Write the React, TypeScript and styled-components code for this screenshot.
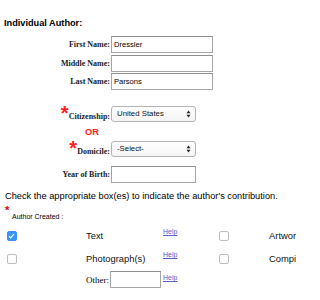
import React from 'react';
import { styled, createGlobalStyle } from 'styled-components';

const GlobalStyle = createGlobalStyle`
    html, body {
        margin: 0;
        padding: 0;
        background: #ffffff;
    }
    body {
        font-family: "Liberation Sans", Arial, sans-serif;
        color: #000;
    }
`;

const SANS = `"Liberation Sans", Arial, sans-serif`;
const SERIF = `"Liberation Serif", "Times New Roman", serif`;

type Contribution = {
    label: string;
    checked: boolean;
};

const leftColumn: Contribution[] = [
    { label: 'Text', checked: true },
    { label: 'Photograph(s)', checked: false },
];

const rightColumn: Contribution[] = [
    { label: 'Artwork', checked: false },
    { label: 'Compilation', checked: false },
];

const SelectArrows: React.FC = () => (
    <ArrowIcon width="5" height="8" viewBox="0 0 5 8">
        <path d="M0.5 3.2 L2.5 0.6 L4.5 3.2 Z" fill="#222" />
        <path d="M0.5 4.8 L2.5 7.4 L4.5 4.8 Z" fill="#222" />
    </ArrowIcon>
);

const CheckBox: React.FC<{ checked: boolean }> = ({ checked }) => (
    <Box $checked={checked}>
        {checked && (
            <svg width="7" height="6" viewBox="0 0 7 6">
                <path d="M1 3.2 L2.7 4.9 L6 1" stroke="#fff" strokeWidth="1.1" fill="none" />
            </svg>
        )}
    </Box>
);

export default function App() {
    return (
        <Page>
            <GlobalStyle />
            <Heading>Individual Author:</Heading>

            <NameGrid>
                <FieldLabel>First Name:</FieldLabel>
                <TextInput defaultValue="Dressler" $width={102} />
                <FieldLabel>Middle Name:</FieldLabel>
                <TextInput defaultValue="" $width={102} />
                <FieldLabel>Last Name:</FieldLabel>
                <TextInput defaultValue="Parsons" $width={102} />
            </NameGrid>

            <PlaceGrid>
                <StarLabel>
                    <Star>*</Star>
                    <StarText>Citizenship:</StarText>
                </StarLabel>
                <SelectWrap>
                    <Select defaultValue="us">
                        <option value="us">United States</option>
                    </Select>
                    <SelectArrows />
                </SelectWrap>

                <OrCell>OR</OrCell>

                <StarLabel>
                    <Star>*</Star>
                    <StarText>Domicile:</StarText>
                </StarLabel>
                <SelectWrap>
                    <Select defaultValue="none">
                        <option value="none">-Select-</option>
                    </Select>
                    <SelectArrows />
                </SelectWrap>
            </PlaceGrid>

            <BirthGrid>
                <FieldLabel>Year of Birth:</FieldLabel>
                <TextInput defaultValue="" $width={85} />
            </BirthGrid>

            <Instruction>Check the appropriate box(es) to indicate the author's contribution.</Instruction>
            <SmallStar>*</SmallStar>
            <CreatedLabel>Author Created :</CreatedLabel>

            <ContributionGrid>
                {leftColumn.map((item, index) => (
                    <React.Fragment key={index}>
                        <CheckBox checked={item.checked} />
                        <OptionText>{item.label}</OptionText>
                        <HelpLink href="#">Help</HelpLink>
                        <CheckBox checked={rightColumn[index].checked} />
                        <OptionText>{rightColumn[index].label}</OptionText>
                    </React.Fragment>
                ))}
                <span />
                <OtherCell>
                    <OtherLabel>Other:</OtherLabel>
                    <TextInput defaultValue="" $width={51} />
                </OtherCell>
                <HelpLink href="#">Help</HelpLink>
            </ContributionGrid>
        </Page>
    );
}

const Page = styled.div`
    width: 296px;
    height: 300px;
    overflow: hidden;
    padding: 18px 0 0 4px;
    box-sizing: border-box;
`;

const Heading = styled.div`
    font-family: ${SANS};
    font-weight: bold;
    font-size: 9.2px;
    line-height: 11px;
    margin-bottom: 7px;
`;

const NameGrid = styled.div`
    display: grid;
    grid-template-columns: 107px auto;
    row-gap: 1.5px;
    align-items: center;
`;

const FieldLabel = styled.div`
    font-family: ${SERIF};
    font-weight: bold;
    font-size: 8px;
    text-align: right;
    padding-right: 1px;
    color: #222;
`;

const TextInput = styled.input<{ $width: number }>`
    width: ${({ $width }) => $width}px;
    height: 17px;
    box-sizing: border-box;
    border: 1px solid #a6a6a6;
    border-top-color: #8f8f8f;
    padding: 0 2px;
    margin: 0;
    font-family: ${SANS};
    font-size: 7.6px;
    color: #000;
    outline: none;
    background: #fff;
`;

const PlaceGrid = styled.div`
    display: grid;
    grid-template-columns: 107px auto;
    margin-top: 15.5px;
`;

const StarLabel = styled.div`
    height: 16px;
    display: flex;
    justify-content: flex-end;
    align-items: flex-end;
    padding-right: 1px;
`;

const Star = styled.span`
    align-self: flex-start;
    font-family: ${SANS};
    font-weight: bold;
    font-size: 20px;
    line-height: 20px;
    height: 16px;
    overflow: visible;
    color: #ff1c1c;
    margin-top: -3px;
`;

const StarText = styled.span`
    font-family: ${SERIF};
    font-weight: bold;
    font-size: 8px;
    line-height: 9px;
    padding-bottom: 1px;
    color: #222;
`;

const SelectWrap = styled.div`
    position: relative;
    width: 85px;
    height: 16px;
`;

const Select = styled.select`
    appearance: none;
    -webkit-appearance: none;
    display: block;
    width: 85px;
    height: 16px;
    box-sizing: border-box;
    border: 1px solid #b4b4b4;
    border-radius: 3px;
    background: linear-gradient(#ffffff, #f4f4f4);
    font-family: ${SANS};
    font-size: 7.8px;
    color: #111;
    padding: 0 0 0 5px;
    margin: 0;
    outline: none;
`;

const ArrowIcon = styled.svg`
    position: absolute;
    right: 5px;
    top: 4px;
    pointer-events: none;
`;

const OrCell = styled.div`
    grid-column: 1 / span 2;
    font-family: ${SANS};
    font-weight: bold;
    font-size: 9.3px;
    color: #ff1c1c;
    padding-left: 81px;
    line-height: 12px;
    margin: 4px 0 3px;
`;

const BirthGrid = styled.div`
    display: grid;
    grid-template-columns: 107px auto;
    margin-top: 9.5px;
    align-items: center;
`;

const Instruction = styled.div`
    font-family: ${SANS};
    font-size: 9.25px;
    line-height: 10px;
    margin-top: 8.4px;
    padding-left: 1px;
    white-space: nowrap;
`;

const SmallStar = styled.div`
    font-family: ${SANS};
    font-weight: bold;
    font-size: 11px;
    color: #e00000;
    line-height: 5px;
    margin-top: 7px;
    padding-left: 1px;
`;

const CreatedLabel = styled.div`
    font-family: ${SANS};
    font-size: 7px;
    line-height: 8px;
    padding-left: 8px;
`;

const ContributionGrid = styled.div`
    display: grid;
    grid-template-columns: 79px 77px 56px 50px auto;
    grid-template-rows: 23px 23px 18px;
    align-items: center;
    margin: 3px 0 0 3px;
    white-space: nowrap;
`;

const Box = styled.span<{ $checked: boolean }>`
    width: 9.5px;
    height: 9.5px;
    box-sizing: border-box;
    border-radius: 2px;
    border: 1px solid ${({ $checked }) => ($checked ? '#3b8ef5' : '#bdbdbd')};
    background: ${({ $checked }) => ($checked ? '#3a95f7' : '#fff')};
    display: flex;
    align-items: center;
    justify-content: center;
`;

const OptionText = styled.span`
    font-family: ${SANS};
    font-size: 9.4px;
    color: #111;
`;

const HelpLink = styled.a`
    font-family: ${SANS};
    font-size: 7px;
    color: #5b5bd0;
    text-decoration: underline;
    align-self: start;
    margin-top: 4px;
`;

const OtherCell = styled.div`
    display: flex;
    align-items: flex-end;
    align-self: start;
    gap: 1px;
    margin-top: 0.7px;
`;

const OtherLabel = styled.span`
    font-family: ${SERIF};
    font-size: 9px;
    line-height: 10px;
    padding-bottom: 3px;
`;
